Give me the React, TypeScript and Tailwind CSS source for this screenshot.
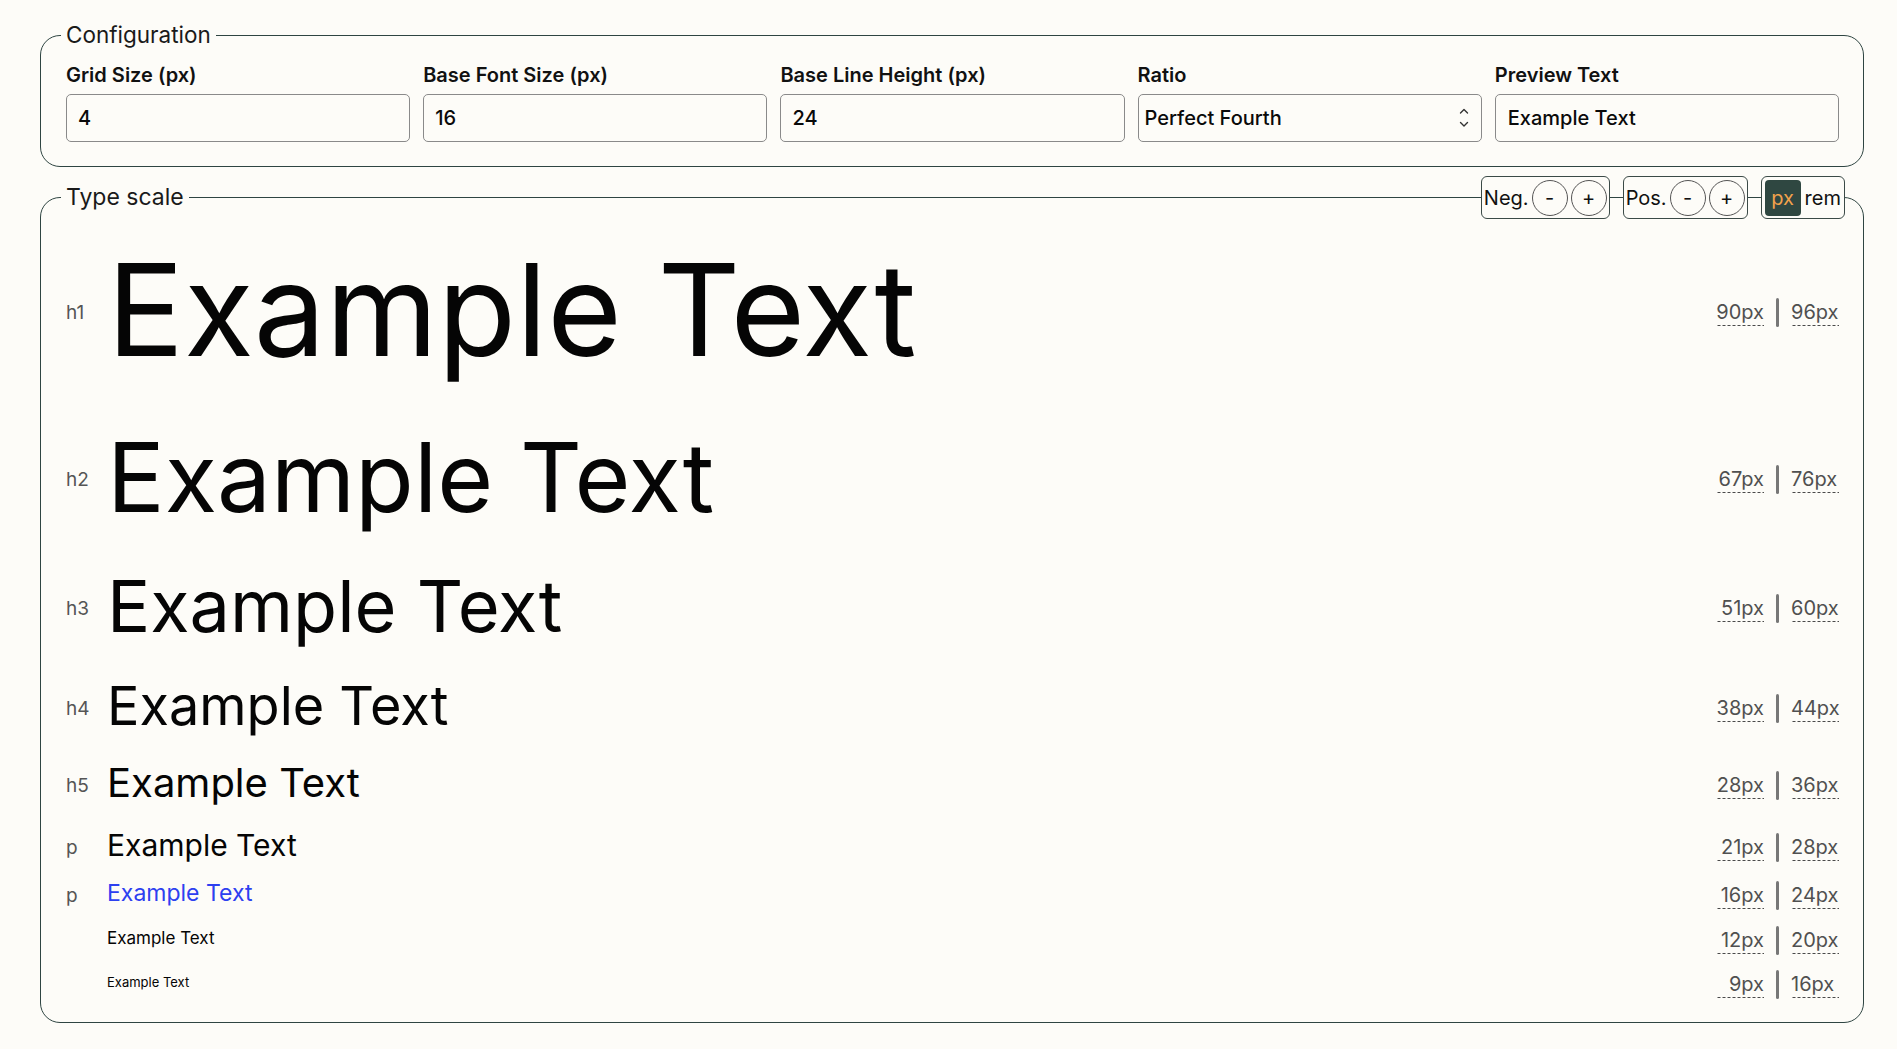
import { useState } from "react";

const FIELDS = [
  { key: "grid", label: "Grid Size (px)", value: "4" },
  { key: "base", label: "Base Font Size (px)", value: "16" },
  { key: "line", label: "Base Line Height (px)", value: "24" },
];

const ROWS = [
  { tag: "h1", row: "h-[128px]", text: "text-[128px] text-[#050505]", size: "90px", lh: "96px" },
  { tag: "h2", row: "mt-[55px] h-[96px]", text: "text-[96px] text-[#050505]", size: "67px", lh: "76px" },
  { tag: "h3", row: "mt-[45px] h-[72px]", text: "text-[72px] text-[#050505]", size: "51px", lh: "60px" },
  { tag: "h4", row: "mt-[37px] h-[54px]", text: "text-[54px] text-[#050505]", size: "38px", lh: "44px" },
  { tag: "h5", row: "mt-[30px] h-[40px]", text: "text-[40px] text-[#050505]", size: "28px", lh: "36px" },
  { tag: "p", row: "mt-[27px] h-[30px]", text: "text-[30px] text-[#050505]", size: "21px", lh: "28px" },
  { tag: "p", row: "mt-[18px] h-[30px]", text: "text-[23px] text-[#2d40f0]", size: "16px", lh: "24px" },
  { tag: "", row: "mt-[15px] h-[30px]", text: "text-[17px] text-[#050505]", size: "12px", lh: "20px" },
  { tag: "", row: "mt-[14px] h-[30px]", text: "text-[13px] text-[#050505]", size: "9px", lh: "16px" },
];

const dashed =
  "bg-[linear-gradient(to_right,#4a4a4a_3px,transparent_3px)] bg-[length:5px_1px] bg-bottom bg-repeat-x pb-[1px]";

function Stepper({ label }: { label: string }) {
  return (
    <div className="flex h-[43px] items-center gap-[3px] rounded-[6px] border border-[#3b4a47] bg-[#fdfcf8] px-[2px]">
      <span className="text-[20px] leading-none text-[#111]">{label}</span>
      <button className="flex h-[36px] w-[36px] items-center justify-center rounded-full border border-[#555] text-[20px] leading-none text-[#111]">
        -
      </button>
      <button className="flex h-[36px] w-[36px] items-center justify-center rounded-full border border-[#555] text-[20px] leading-none text-[#111]">
        +
      </button>
    </div>
  );
}

export default function App() {
  const [preview, setPreview] = useState("Example Text");
  const [unit, setUnit] = useState("px");

  return (
    <div className="min-h-screen bg-[#fdfcf8] pl-[40px] pr-[33px] pt-[19px] font-[family-name:Inter,'Liberation_Sans',sans-serif] text-[#111]">
      {/* Configuration */}
      <fieldset className="rounded-[20px] border border-[#2f4542] pb-[24px] pl-[25px] pr-[24px] pt-[10px]">
        <legend className="-ml-[5px] px-[5px] text-[22.5px] leading-[32px] text-[#1a1a1a]">Configuration</legend>
        <div className="grid grid-cols-5 gap-x-[13px]">
          {FIELDS.map((f) => (
            <label key={f.key} className="flex flex-col">
              <span className="text-[20px] font-semibold leading-[28px] text-[#111]">{f.label}</span>
              <input
                defaultValue={f.value}
                className="mt-[5px] h-[48px] rounded-[5px] border border-[#8a8a8a] bg-transparent pl-[11px] text-[20px] font-medium text-[#0a0a0a] outline-none"
              />
            </label>
          ))}
          <label className="flex flex-col">
            <span className="text-[20px] font-semibold leading-[28px] text-[#111]">Ratio</span>
            <div className="relative mt-[5px]">
              <select
                defaultValue="Perfect Fourth"
                className="h-[48px] w-full appearance-none rounded-[5px] border border-[#8a8a8a] bg-transparent pl-[6px] text-[20px] font-medium text-[#0a0a0a] outline-none"
              >
                <option>Minor Second</option>
                <option>Major Second</option>
                <option>Minor Third</option>
                <option>Major Third</option>
                <option>Perfect Fourth</option>
                <option>Augmented Fourth</option>
                <option>Perfect Fifth</option>
                <option>Golden Ratio</option>
              </select>
              <svg
                className="pointer-events-none absolute right-[13px] top-[13px]"
                width="10"
                height="22"
                viewBox="0 0 10 22"
                fill="none"
                stroke="#333"
                strokeWidth="1.4"
                strokeLinecap="round"
                strokeLinejoin="round"
              >
                <path d="M1.5 6 L5 2.5 L8.5 6" />
                <path d="M1.5 15.5 L5 19 L8.5 15.5" />
              </svg>
            </div>
          </label>
          <label className="flex flex-col">
            <span className="text-[20px] font-semibold leading-[28px] text-[#111]">Preview Text</span>
            <input
              value={preview}
              onChange={(e) => setPreview(e.target.value)}
              className="mt-[5px] h-[48px] rounded-[5px] border border-[#8a8a8a] bg-transparent pl-[12px] text-[20px] font-medium text-[#0a0a0a] outline-none"
            />
          </label>
        </div>
      </fieldset>

      {/* Type scale */}
      <div className="relative mt-[14px]">
        <fieldset className="rounded-[20px] border border-[#2f4542] pb-[25px] pl-[25px] pr-[24px] pt-[33px]">
          <legend className="-ml-[5px] px-[5px] text-[23px] leading-[32px] text-[#1a1a1a]">Type scale</legend>
          <div className="flex flex-col">
            {ROWS.map((r, i) => (
              <div key={i} className={`flex items-center ${r.row}`}>
                <span className="mt-[4px] w-[41px] shrink-0 text-[19px] leading-none text-[#555]">{r.tag}</span>
                <span className={`flex-1 whitespace-nowrap leading-none ${r.text}`}>{preview}</span>
                <div className="mt-[5px] flex items-center gap-[12px]">
                  <span className={`w-[48px] text-right text-[20px] leading-[26px] text-[#505050] ${dashed}`}>
                    {r.size}
                  </span>
                  <span className="h-[29px] w-[3px] rounded-full bg-[#777]" />
                  <span className={`w-[48px] text-left text-[20px] leading-[26px] text-[#505050] ${dashed}`}>
                    {r.lh}
                  </span>
                </div>
              </div>
            ))}
          </div>
        </fieldset>

        <div className="absolute right-[19px] top-[-5px] flex items-center gap-[13px]">
          <Stepper label="Neg." />
          <Stepper label="Pos." />
          <div className="flex h-[43px] items-center gap-[4px] rounded-[6px] border border-[#3b4a47] bg-[#fdfcf8] pl-[3px] pr-[3px]">
            <button
              onClick={() => setUnit("px")}
              className={
                unit === "px"
                  ? "flex h-[36px] w-[36px] items-center justify-center rounded-[4px] bg-[#2f4741] text-[20px] leading-none text-[#f2a24c]"
                  : "flex h-[36px] w-[36px] items-center justify-center rounded-[4px] text-[20px] leading-none text-[#111]"
              }
            >
              px
            </button>
            <button
              onClick={() => setUnit("rem")}
              className={
                unit === "rem"
                  ? "flex h-[36px] items-center justify-center rounded-[4px] bg-[#2f4741] px-[2px] text-[20px] leading-none text-[#f2a24c]"
                  : "flex h-[36px] items-center justify-center rounded-[4px] text-[20px] leading-none text-[#111]"
              }
            >
              rem
            </button>
          </div>
        </div>
      </div>
    </div>
  );
}
